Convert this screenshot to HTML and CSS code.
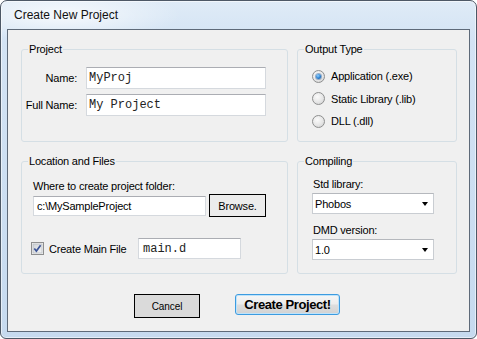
FILE: index.html
```html
<!DOCTYPE html>
<html>
<head>
<meta charset="utf-8">
<title>Create New Project</title>
<link rel="stylesheet" href="styles.css">
</head>
<body>
<div class="window">
  <div class="titlebar">Create New Project</div>
  <div class="client">
    <div class="groups">
      <div class="group g-project">
        <span class="group-title">Project</span>
        <div class="form-row">
          <span class="lbl">Name:</span>
          <div class="textbox mono w-name">MyProj</div>
        </div>
        <div class="form-row second">
          <span class="lbl">Full Name:</span>
          <div class="textbox mono w-name">My Project</div>
        </div>
      </div>

      <div class="group g-output">
        <span class="group-title">Output Type</span>
        <div class="radio-row"><span class="radio checked"></span><span>Application (.exe)</span></div>
        <div class="radio-row"><span class="radio"></span><span>Static Library (.lib)</span></div>
        <div class="radio-row"><span class="radio"></span><span>DLL (.dll)</span></div>
      </div>

      <div class="group g-location">
        <span class="group-title">Location and Files</span>
        <div class="caption">Where to create project folder:</div>
        <div class="path-row">
          <div class="textbox path">c:\MySampleProject</div>
          <div class="btn btn-browse">Browse.</div>
        </div>
        <div class="check-row">
          <svg class="checkbox" width="13" height="13" viewBox="0 0 13 13">
            <defs>
              <linearGradient id="cbg" x1="0" y1="0" x2="1" y2="1">
                <stop offset="0" stop-color="#cfd3d8"/>
                <stop offset="1" stop-color="#f4f4f4"/>
              </linearGradient>
            </defs>
            <rect x="0.5" y="0.5" width="12" height="12" fill="#f4f4f4" stroke="#8e8f8f"/>
            <rect x="2" y="2" width="9" height="9" fill="url(#cbg)" stroke="#b9bdc2" stroke-width="0.8"/>
            <path d="M3.3 6.4 L5.4 9.1 L9.6 3.3" fill="none" stroke="#3d5597" stroke-width="1.7"/>
          </svg>
          <span class="check-label">Create Main File</span>
          <div class="textbox mono mainfile">main.d</div>
        </div>
      </div>

      <div class="group g-compiling">
        <span class="group-title">Compiling</span>
        <div class="caption">Std library:</div>
        <div class="combo"><span>Phobos</span><span class="arrow"></span></div>
        <div class="caption second">DMD version:</div>
        <div class="combo"><span>1.0</span><span class="arrow"></span></div>
      </div>
    </div>

    <div class="buttons">
      <div class="btn btn-cancel">Cancel</div>
      <div class="btn btn-create">Create Project!</div>
    </div>
  </div>
</div>
</body>
</html>
```

FILE: styles.css
```css
html, body {
  margin: 0;
  padding: 0;
  background: #ffffff;
}

body {
  font-family: "Liberation Sans", Arial, sans-serif;
  font-size: 11px;
  letter-spacing: -0.2px;
  color: #000;
}

.window {
  width: 477px;
  height: 339px;
  box-sizing: border-box;
  border: 1px solid #4d5866;
  border-radius: 7px 7px 6px 6px;
  padding: 0 6px 6px 6px;
  display: flex;
  flex-direction: column;
  background:
    radial-gradient(ellipse 120px 26px at 60px 14px, rgba(255,255,255,0.75), rgba(255,255,255,0) 100%),
    linear-gradient(180deg, #dfebf7 0%, #d3e3f4 12%, #c6daef 100%);
  box-shadow: inset 0 0 0 1px rgba(255,255,255,0.55);
}

.titlebar {
  height: 28px;
  line-height: 28px;
  padding-left: 7px;
  font-size: 12px;
  letter-spacing: 0;
  color: #111;
  flex: none;
}

.client {
  flex: 1;
  border: 1px solid #5e6a79;
  background: #f0f0f0;
  padding: 19px 0 0 13px;
}

.groups {
  display: grid;
  grid-template-columns: 267px 160px;
  grid-template-rows: 93px 113px;
  column-gap: 9px;
  row-gap: 19px;
}

.group {
  position: relative;
  box-sizing: border-box;
  border: 1px solid #d5dfe5;
  border-radius: 3px;
}

.group-title {
  position: absolute;
  top: -7px;
  left: 6px;
  padding: 0 1px;
  line-height: 13px;
  background: #f0f0f0;
}

/* Project */
.g-project {
  padding-top: 17px;
}

.form-row {
  display: flex;
  align-items: center;
  height: 22px;
}

.form-row.second {
  margin-top: 5px;
}

.lbl {
  width: 55px;
  text-align: right;
  margin-right: 9px;
}

.textbox {
  box-sizing: border-box;
  background: #fff;
  border: 1px solid #d5d9de;
  border-top-color: #abadb3;
  display: flex;
  align-items: center;
  padding-left: 2px;
  white-space: nowrap;
}

.mono {
  font-family: "Liberation Mono", "Courier New", monospace;
  font-size: 12px;
  letter-spacing: 0;
  color: #222;
}

.w-name {
  width: 180px;
  height: 22px;
}

/* Output type */
.g-output {
  padding: 15px 0 0 14px;
}

.radio-row {
  display: flex;
  align-items: center;
  height: 22.5px;
}

.radio {
  width: 13px;
  height: 13px;
  box-sizing: border-box;
  border-radius: 50%;
  border: 1px solid #8e8f8f;
  background: radial-gradient(circle at 40% 35%, #fbfbfb 0%, #e6e6e6 55%, #c9cacb 100%);
  margin-right: 6px;
  display: flex;
  align-items: center;
  justify-content: center;
  flex: none;
}

.radio.checked::after {
  content: "";
  width: 5px;
  height: 5px;
  border-radius: 50%;
  background: radial-gradient(circle at 40% 35%, #8fd0ff 0%, #2a7fd0 55%, #164f8c 100%);
  box-shadow: 0 0 0 1px rgba(40,90,150,0.45);
}

/* Location */
.g-location {
  padding: 18px 0 0 11px;
}

.caption {
  line-height: 13px;
  height: 13px;
}

.path-row {
  display: flex;
  align-items: center;
  height: 23px;
  margin-top: 1px;
}

.textbox.path {
  width: 173px;
  height: 20px;
  padding-left: 3px;
}

.btn {
  box-sizing: border-box;
  display: flex;
  align-items: center;
  justify-content: center;
  white-space: nowrap;
}

.btn-browse {
  width: 57px;
  height: 23px;
  margin-left: 3px;
  border: 1px solid #000;
  background: #ececec;
}

.check-row {
  display: flex;
  align-items: center;
  height: 21px;
  margin-top: 21px;
  margin-left: -2px;
}

.checkbox {
  flex: none;
  margin-right: 5px;
}

.check-label {
  width: 89px;
}

.textbox.mainfile {
  width: 103px;
  height: 21px;
  font-size: 12px;
  padding-left: 4px;
}

/* Compiling */
.g-compiling {
  padding: 16px 0 0 14px;
}

.g-compiling .caption {
  margin-left: 1px;
}

.g-compiling .caption.second {
  margin-top: 10px;
}

.combo {
  box-sizing: border-box;
  width: 122px;
  height: 21px;
  margin-top: 2px;
  background: #fff;
  border: 1px solid #c9cdd2;
  border-top-color: #b5b8bd;
  display: flex;
  align-items: center;
  justify-content: space-between;
  padding: 0 5px 0 2px;
}

.arrow {
  width: 0;
  height: 0;
  border-left: 3.5px solid transparent;
  border-right: 3.5px solid transparent;
  border-top: 4px solid #000;
}

/* Buttons */
.buttons {
  display: flex;
  align-items: flex-start;
  margin-top: 20px;
  padding-left: 113px;
}

.btn-cancel {
  width: 66px;
  height: 24px;
  border: 1px solid #000;
  background: #dadada;
  font-size: 10px;
  letter-spacing: -0.1px;
}

.btn-create {
  width: 105px;
  height: 21px;
  margin-left: 35px;
  border: 1px solid #3c9be0;
  border-radius: 3px;
  box-shadow: inset 0 0 0 1px #bfe3fa;
  background: linear-gradient(180deg, #f6f6f6 0%, #ececec 48%, #dedede 52%, #d2d2d2 100%);
  font-weight: bold;
  font-size: 13px;
  letter-spacing: -0.4px;
}
```
